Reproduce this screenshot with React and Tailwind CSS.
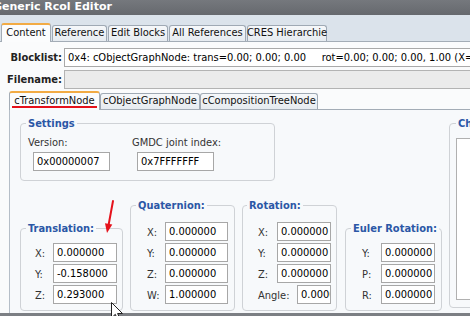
import React from "react";

function Field({ value, w = "w-[64px]", h = "h-[19px]" }) {
  return (
    <div
      className={`${w} ${h} shrink-0 overflow-hidden whitespace-nowrap border border-[#a7a7a7] bg-white pl-[3px] text-[11px] leading-[17px] text-black`}
    >
      {value}
    </div>
  );
}

function Row({ label, value, lw = "w-[18px]", w = "w-[64px]" }) {
  return (
    <div className="flex h-[19px] items-center">
      <span className={`${lw} shrink-0 pt-[3px] text-[#333]`}>{label}</span>
      <Field value={value} w={w} />
    </div>
  );
}

function Group({ title, className = "", legendMl = "ml-[5px]", children }) {
  return (
    <fieldset className={`shrink-0 rounded-[4px] border border-[#cfd2d6] ${className}`}>
      <legend className={`${legendMl} whitespace-nowrap px-[2px] text-[11px] font-bold leading-[13px] text-[#2b57a6]`}>
        {title}
      </legend>
      {children}
    </fieldset>
  );
}

function OuterTab({ label, w, active }) {
  if (active) {
    return (
      <div
        className={`${w} -mb-px flex h-[19px] shrink-0 items-center justify-center whitespace-nowrap rounded-t-[3px] border-x border-t-2 border-x-[#a3acb6] border-t-[#f2ab44] bg-[#fbfcfd] pb-[1px] text-[#111]`}
      >
        {label}
      </div>
    );
  }
  return (
    <div
      className={`${w} flex h-[16px] shrink-0 items-center justify-center whitespace-nowrap rounded-t-[3px] border-x border-t border-[#9fa9b4] bg-gradient-to-b from-[#f6f8fa] to-[#e6ebf0] text-[#111]`}
    >
      {label}
    </div>
  );
}

export default function App() {
  return (
    <div className="relative h-[316px] w-[470px] overflow-hidden whitespace-nowrap bg-[#fafbfc] font-['DejaVu_Sans_Condensed','DejaVu_Sans',sans-serif] text-[11px] text-[#222]">
      {/* title bar */}
      <div className="h-[15px] overflow-hidden bg-gradient-to-b from-[#75787d] to-[#66696e]">
        <span className="-ml-[7px] block whitespace-nowrap font-['DejaVu_Sans',sans-serif] text-[11px] font-bold leading-[13px] text-white">
          Generic Rcol Editor
        </span>
      </div>

      {/* outer tabs */}
      <div className="flex h-[27px] items-end gap-[1px] border-b border-[#a3acb6] bg-[#dbe3eb] pl-[1px]">
        <OuterTab label="Content" w="w-[50px]" active />
        <OuterTab label="Reference" w="w-[55px]" />
        <OuterTab label="Edit Blocks" w="w-[60px]" />
        <OuterTab label="All References" w="w-[77px]" />
        <OuterTab label="CRES Hierarchie" w="w-[80px]" />
      </div>

      {/* blocklist / filename */}
      <div className="flex flex-col gap-[3px] pt-[6px]">
        <div className="flex h-[19px] items-center">
          <span className="w-[62px] shrink-0 pt-[1px] text-right font-bold text-[#222]">Blocklist:</span>
          <div className="ml-[2px] h-[19px] w-[420px] shrink-0 overflow-hidden whitespace-pre border border-[#a9a9a9] bg-white pl-[3px] leading-[17px] text-black">
            {"0x4: cObjectGraphNode: trans=0.00; 0.00; 0.00     rot=0.00; 0.00; 0.00, 1.00 (X=0.00; Y=0.00; Z=0.00)"}
          </div>
        </div>
        <div className="flex h-[19px] items-center">
          <span className="w-[62px] shrink-0 pt-[1px] text-right font-bold text-[#222]">Filename:</span>
          <div className="ml-[2px] h-[19px] w-[420px] shrink-0 border border-[#b3b3b3] bg-[#ebebeb]" />
        </div>
      </div>

      {/* inner tabs */}
      <div className="mt-[2px] ml-[9px] flex h-[19px] items-end border-b border-[#a3acb6]">
        <div className="relative -mb-px flex h-[19px] w-[91px] shrink-0 items-center justify-center rounded-t-[3px] border-x border-t-2 border-x-[#a3acb6] border-t-[#f2ab44] bg-[#fbfcfd] pb-[1px] text-[#111]">
          cTransformNode
          <div className="absolute bottom-[2px] left-[2px] right-[2px] h-[2px] bg-[#e5121b]" />
        </div>
        <div className="flex h-[16px] w-[100px] shrink-0 items-center justify-center rounded-t-[3px] border-x border-t border-[#9fa9b4] bg-gradient-to-b from-[#f6f8fa] to-[#e6ebf0] text-[#111]">
          cObjectGraphNode
        </div>
        <div className="flex h-[16px] w-[118px] shrink-0 items-center justify-center rounded-t-[3px] border-x border-t border-[#9fa9b4] bg-gradient-to-b from-[#f6f8fa] to-[#e6ebf0] text-[#111]">
          cCompositionTreeNode
        </div>
      </div>

      {/* panel */}
      <div className="ml-[9px] flex h-[203px] border-l border-[#b5bec8] bg-[#f7f9fb] pl-[10px] pt-[7px]">
        <div className="flex w-[422px] shrink-0 flex-col">
          <Group title="Settings" className="h-[64px] w-[255px]">
            <div className="flex pl-[7px] pt-[6px]">
              <div className="flex w-[104px] flex-col">
                <span className="leading-[13px] text-[#333]">Version:</span>
                <div className="ml-[5px] mt-[3px]">
                  <Field value="0x00000007" w="w-[77px]" />
                </div>
              </div>
              <div className="flex flex-col">
                <span className="leading-[13px] text-[#333]">GMDC joint index:</span>
                <div className="ml-[5px] mt-[3px]">
                  <Field value="0x7FFFFFFF" w="w-[77px]" />
                </div>
              </div>
            </div>
          </Group>

          <div className="flex flex-1 items-end gap-[7px] pb-[2px]">
            <Group title="Translation:" className="w-[103px]">
              <div className="flex flex-col gap-[2px] pb-[6px] pl-[14px] pt-[8px]">
                <Row label="X:" value="0.000000" />
                <Row label="Y:" value="-0.158000" />
                <Row label="Z:" value="0.293000" />
              </div>
            </Group>
            <Group title="Quaternion:" className="w-[105px]">
              <div className="flex flex-col gap-[2px] pb-[6px] pl-[16px] pt-[10px]">
                <Row label="X:" value="0.000000" w="w-[63px]" />
                <Row label="Y:" value="0.000000" w="w-[63px]" />
                <Row label="Z:" value="0.000000" w="w-[63px]" />
                <Row label="W:" value="1.000000" w="w-[63px]" />
              </div>
            </Group>
            <Group title="Rotation:" className="w-[95px]" legendMl="ml-[4px]">
              <div className="flex flex-col gap-[2px] pb-[6px] pl-[15px] pt-[10px]">
                <Row label="X:" value="0.000000" lw="w-[19px]" w="w-[54px]" />
                <Row label="Y:" value="0.000000" lw="w-[19px]" w="w-[54px]" />
                <Row label="Z:" value="0.000000" lw="w-[19px]" w="w-[54px]" />
                <Row label="Angle:" value="0.000000" lw="w-[39px]" w="w-[34px]" />
              </div>
            </Group>
            <Group title="Euler Rotation:" className="ml-[1px] w-[97px]">
              <div className="flex flex-col gap-[2px] pb-[6px] pl-[16px] pt-[8px]">
                <Row label="Y:" value="0.000000" lw="w-[19px]" w="w-[54px]" />
                <Row label="P:" value="0.000000" lw="w-[19px]" w="w-[54px]" />
                <Row label="R:" value="0.000000" lw="w-[19px]" w="w-[54px]" />
              </div>
            </Group>
          </div>
        </div>

        <Group title="Child Nodes:" className="ml-[7px] h-[191px] w-[80px]" legendMl="ml-[6px]">
          <div className="ml-[6px] mt-[8px] h-[162px] w-[80px] border border-[#b0b0b0] bg-white" />
        </Group>
      </div>

      {/* bottom edge */}
      <div className="h-[3px] bg-[#7c7f84]" />

      {/* red annotation arrow */}
      <svg className="absolute left-[98px] top-[196px]" width="22" height="42" viewBox="0 0 22 42">
        <line x1="15" y1="5" x2="10.4" y2="30" stroke="#e5121b" strokeWidth="2" strokeLinecap="round" />
        <polygon points="9,37 14.3,28.6 7,27.3" fill="#e5121b" />
      </svg>

      {/* mouse cursor */}
      <svg className="absolute left-[111px] top-[302px]" width="13" height="20" viewBox="0 0 13 20">
        <path d="M0.5 0.5 L0.5 16 L4.3 12.3 L6.8 18 L9 17 L6.6 11.5 L11.5 11.5 Z" fill="#fff" stroke="#222" strokeWidth="1" strokeLinejoin="round" />
      </svg>
    </div>
  );
}
